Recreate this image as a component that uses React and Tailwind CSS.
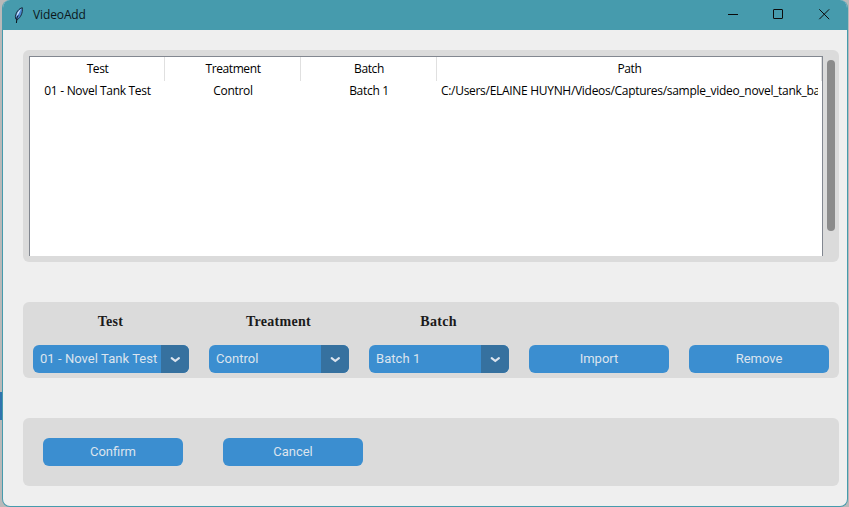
import React from "react";

const UI = "font-['Open_Sans','Noto_Sans',sans-serif]";

function Feather() {
  return (
    <svg width="10" height="17" viewBox="0 0 10 17" className="ml-[11px] shrink-0">
      <path d="M8.300 .7C5 1.500 2 5 1.400 9.500L1.800 12L3.400 12.600C6.500 10.500 9 6 8.300 .7Z" fill="#4a86cf" stroke="#16222e" strokeWidth=".9" />
      <path d="M7 1.900C4.500 3.500 2.700 6.500 2.300 9.800L4.400 7Z" fill="#dceaff" />
      <path d="M4.200 8.500L3 10.800L2.400 16" fill="none" stroke="#0c141c" strokeWidth="1" />
    </svg>
  );
}

function TitleBar() {
  return (
    <header className="flex h-[30px] shrink-0 items-center bg-[#469bad] text-[#0b171a]">
      <Feather />
      <span className={`ml-[9px] text-[12px] leading-[30px] tracking-[-0.12px] ${UI}`}>VideoAdd</span>
      <div className="ml-auto flex items-center">
        <svg width="119" height="30" viewBox="0 0 119 30" fill="none" stroke="#0b0b0b" strokeWidth="1">
          <path d="M0 14.500H10" />
          <rect x="45.500" y="9.500" width="9" height="9" rx=".4" />
          <path d="M91.300 9.300L101.200 19.200M101.200 9.300L91.300 19.200" />
        </svg>
      </div>
    </header>
  );
}

function HeaderCell({ children }) {
  return <div className="border-r border-[#e0e0e0] pl-px text-center leading-6">{children}</div>;
}

function Table() {
  return (
    <div className={`h-[200px] w-[794px] overflow-hidden border-x border-t border-[#828790] bg-white text-[12px] text-black ${UI}`}>
      <div className="grid h-6 grid-cols-[135px_136px_136px_385px] tracking-[-0.4px]">
        <HeaderCell>Test</HeaderCell>
        <HeaderCell>Treatment</HeaderCell>
        <HeaderCell>Batch</HeaderCell>
        <HeaderCell>Path</HeaderCell>
      </div>
      <div className="grid h-5 grid-cols-[135px_136px_136px_385px] text-center leading-5 tracking-[-0.3px]">
        <div>01 - Novel Tank Test</div>
        <div>Control</div>
        <div>Batch 1</div>
        <div className="ml-1 mr-1 overflow-hidden whitespace-nowrap text-left">
          C:/Users/ELAINE HUYNH/Videos/Captures/sample_video_novel_tank_ba
        </div>
      </div>
    </div>
  );
}

function Select({ children, wide }) {
  return (
    <div className={`flex h-7 overflow-hidden rounded-[6px] bg-[#3b8ed0] ${wide ? "w-[156px]" : "w-[140px]"}`}>
      <span className="flex-1 whitespace-nowrap pl-[7px] text-[13px] leading-7 tracking-[0.05px] text-[#dce4ee]">{children}</span>
      <span className="flex w-7 items-center justify-center bg-[#36719f]">
        <svg width="12" height="8" viewBox="0 0 12 8" fill="none" stroke="#dce4ee" strokeWidth="2.200" strokeLinecap="round" strokeLinejoin="round">
          <path d="M2.700 3.200L6.300 6L9.900 3.200" />
        </svg>
      </span>
    </div>
  );
}

function Button({ children }) {
  return (
    <button className="h-7 w-[140px] rounded-[6px] bg-[#3b8ed0] text-center text-[13px] leading-7 text-[#dce4ee]">
      {children}
    </button>
  );
}

function Field({ label, value, wide }) {
  return (
    <div className="flex flex-col items-center">
      <div className="mb-[14px] h-[18px] pr-px font-['Liberation_Serif',serif] text-[14px] font-bold leading-[18px] tracking-[0.3px] text-[#1a1a1a]">{label}</div>
      <Select wide={wide}>{value}</Select>
    </div>
  );
}

export default function App() {
  return (
    <div className="relative h-[507px] w-[849px] overflow-hidden bg-[#b9b9b9] pl-[2px] font-['Roboto',sans-serif]">
      <div className="absolute left-0 top-[392px] h-7 w-[2px] bg-[#2f74ae]" />
      <div className="flex h-[507px] w-[846px] flex-col overflow-hidden rounded-[8px] border border-t-0 border-[#469bad] bg-[#efefef]">
        <TitleBar />
        <main className="flex flex-col gap-10 pl-5 pt-5">
          <section className="flex h-[212px] w-[816px] rounded-[6px] bg-[#dbdbdb] pl-[6px] pt-[6px]">
            <Table />
            <div className="ml-1 mt-1 h-[171px] w-2 rounded-full bg-[#8b8b8b]" />
          </section>
          <section className="flex h-[76px] w-[816px] gap-5 rounded-[6px] bg-[#dbdbdb] pl-[10px] pt-[11px]">
            <Field label="Test" value="01 - Novel Tank Test" wide />
            <Field label="Treatment" value="Control" />
            <Field label="Batch" value="Batch 1" />
            <div className="flex gap-5 pt-8">
              <Button>Import</Button>
              <Button>Remove</Button>
            </div>
          </section>
          <section className="flex h-[68px] w-[816px] gap-10 rounded-[6px] bg-[#dbdbdb] pl-5 pt-5">
            <Button>Confirm</Button>
            <Button>Cancel</Button>
          </section>
        </main>
      </div>
    </div>
  );
}
